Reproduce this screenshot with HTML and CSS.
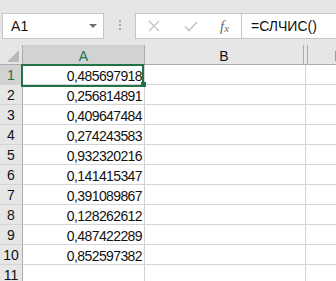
FILE: index.html
```html
<!DOCTYPE html>
<html lang="ru">
<head>
    <meta charset="UTF-8">
    <title>Лист1</title>
    <link rel="stylesheet" href="styles.css">
</head>
<body>
    <div class="toolbar">
        <div class="namebox">
            <span class="ref">A1</span>
            <span class="arrow"></span>
        </div>
        <div class="dots"><i></i><i></i><i></i></div>
        <div class="fxbox">
            <svg class="icon" width="12" height="12" viewBox="0 0 12 12">
                <path d="M1 1 L11 11 M11 1 L1 11" stroke="#c4c4c4" stroke-width="1.4" fill="none"/>
            </svg>
            <svg class="icon" width="14" height="11" viewBox="0 0 14 11">
                <path d="M1 5.5 L5 9.5 L13 1" stroke="#c4c4c4" stroke-width="1.6" fill="none"/>
            </svg>
            <span class="fx">f<sub>x</sub></span>
        </div>
        <div class="formula">=СЛЧИС()</div>
    </div>

    <div class="sheet">
        <div class="row head">
            <div class="corner"><span class="tri"></span></div>
            <div class="col a sel">A</div>
            <div class="col b">B</div>
            <div class="col hidden"></div>
            <div class="col d">D</div>
        </div>
        <div class="row">
            <div class="rh sel">1</div>
            <div class="cell a active">0,485697918</div>
            <div class="cell b"></div>
            <div class="cell d"></div>
        </div>
        <div class="row">
            <div class="rh">2</div>
            <div class="cell a">0,256814891</div>
            <div class="cell b"></div>
            <div class="cell d"></div>
        </div>
        <div class="row">
            <div class="rh">3</div>
            <div class="cell a">0,409647484</div>
            <div class="cell b"></div>
            <div class="cell d"></div>
        </div>
        <div class="row">
            <div class="rh">4</div>
            <div class="cell a">0,274243583</div>
            <div class="cell b"></div>
            <div class="cell d"></div>
        </div>
        <div class="row">
            <div class="rh">5</div>
            <div class="cell a">0,932320216</div>
            <div class="cell b"></div>
            <div class="cell d"></div>
        </div>
        <div class="row">
            <div class="rh">6</div>
            <div class="cell a">0,141415347</div>
            <div class="cell b"></div>
            <div class="cell d"></div>
        </div>
        <div class="row">
            <div class="rh">7</div>
            <div class="cell a">0,391089867</div>
            <div class="cell b"></div>
            <div class="cell d"></div>
        </div>
        <div class="row">
            <div class="rh">8</div>
            <div class="cell a">0,128262612</div>
            <div class="cell b"></div>
            <div class="cell d"></div>
        </div>
        <div class="row">
            <div class="rh">9</div>
            <div class="cell a">0,487422289</div>
            <div class="cell b"></div>
            <div class="cell d"></div>
        </div>
        <div class="row">
            <div class="rh">10</div>
            <div class="cell a">0,852597382</div>
            <div class="cell b"></div>
            <div class="cell d"></div>
        </div>
        <div class="row">
            <div class="rh">11</div>
            <div class="cell a"></div>
            <div class="cell b"></div>
            <div class="cell d"></div>
        </div>
    </div>
</body>
</html>
```

FILE: styles.css
```css
body {
    margin: 0;
    width: 336px;
    height: 281px;
    overflow: hidden;
    background: #e6e6e6;
    font-family: "Liberation Sans", Arial, sans-serif;
    color: #111;
}
.toolbar {
    display: flex;
    align-items: flex-start;
    height: 48px;
    padding-top: 13px;
    box-sizing: border-box;
    border-top: 3px solid #e1e1e1;
    margin-top: -3px;
}
.namebox {
    display: flex;
    align-items: center;
    justify-content: space-between;
    margin-left: 2px;
    width: 102px;
    height: 26px;
    box-sizing: border-box;
    border: 1px solid #c6c6c6;
    background: white;
    padding: 0 6px 0 8px;
}
.ref {
    font-size: 14px;
    letter-spacing: 0.2px;
}
.arrow {
    width: 0;
    height: 0;
    border-left: 4px solid transparent;
    border-right: 4px solid transparent;
    border-top: 4px solid #6f6f6f;
}
.dots {
    display: flex;
    flex-direction: column;
    align-items: center;
    gap: 2px;
    width: 31px;
    padding-top: 7px;
}
.dots i {
    width: 2px;
    height: 2px;
    background: #a6a6a6;
}
.fxbox {
    display: flex;
    align-items: center;
    width: 106px;
    height: 26px;
    box-sizing: border-box;
    border: 1px solid #c6c6c6;
    border-right: none;
    background: white;
    padding-left: 12px;
}
.fxbox .icon:nth-child(2) {
    margin-left: 24px;
}
.fx {
    margin-left: 22px;
    font-family: "Liberation Serif", serif;
    font-style: italic;
    font-size: 15px;
    color: #6a6a6a;
}
.fx sub {
    font-size: 11px;
    vertical-align: -1px;
}
.formula {
    flex: 1;
    height: 26px;
    box-sizing: border-box;
    border: 1px solid #c6c6c6;
    border-right: none;
    background: white;
    padding-left: 9px;
    font-size: 14px;
    line-height: 24px;
}
.sheet {
    background: white;
}
.row {
    display: flex;
    height: 20px;
}
.row > div {
    flex: none;
    height: 20px;
    box-sizing: border-box;
    border-right: 1px solid #d4d4d4;
    border-bottom: 1px solid #d4d4d4;
}
.head {
    background: #e6e6e6;
}
.head > div {
    border-right-color: #ababab;
    border-bottom-color: #ababab;
    text-align: center;
    font-size: 14px;
    line-height: 17px;
    padding-top: 3px;
}
.corner {
    position: relative;
    width: 23px;
}
.tri {
    position: absolute;
    right: 3px;
    bottom: 2px;
    width: 0;
    height: 0;
    border-left: 12px solid transparent;
    border-bottom: 12px solid #b9b9b9;
}
.a {
    width: 122px;
}
.b {
    width: 159px;
}
.head .b {
    width: 159px;
}
.head .hidden {
    width: 4px;
    border-left: none;
}
.cell.b {
    width: 161px;
}
.d {
    width: 64px;
}
.col.sel {
    background: #d2d2d2;
    color: #217346;
    border-bottom-color: #217346;
}
.rh {
    width: 23px;
    background: #e6e6e6;
    border-right-color: #ababab !important;
    border-bottom-color: #d4d4d4;
    text-align: center;
    font-size: 14px;
    line-height: 17px;
    padding-top: 2px;
}
.rh.sel {
    background: #d2d2d2;
    color: #217346;
}
.cell {
    text-align: right;
    font-size: 14px;
    letter-spacing: -0.6px;
    line-height: 16px;
    padding: 3px 2px 0 0;
}
.active {
    position: relative;
}
.active::after {
    content: "";
    position: absolute;
    left: -2px;
    top: -1px;
    width: 119px;
    height: 19px;
    border: 2px solid #217346;
}
.active::before {
    content: "";
    position: absolute;
    right: -2px;
    bottom: -3px;
    width: 5px;
    height: 5px;
    background: #217346;
    z-index: 1;
}
```
